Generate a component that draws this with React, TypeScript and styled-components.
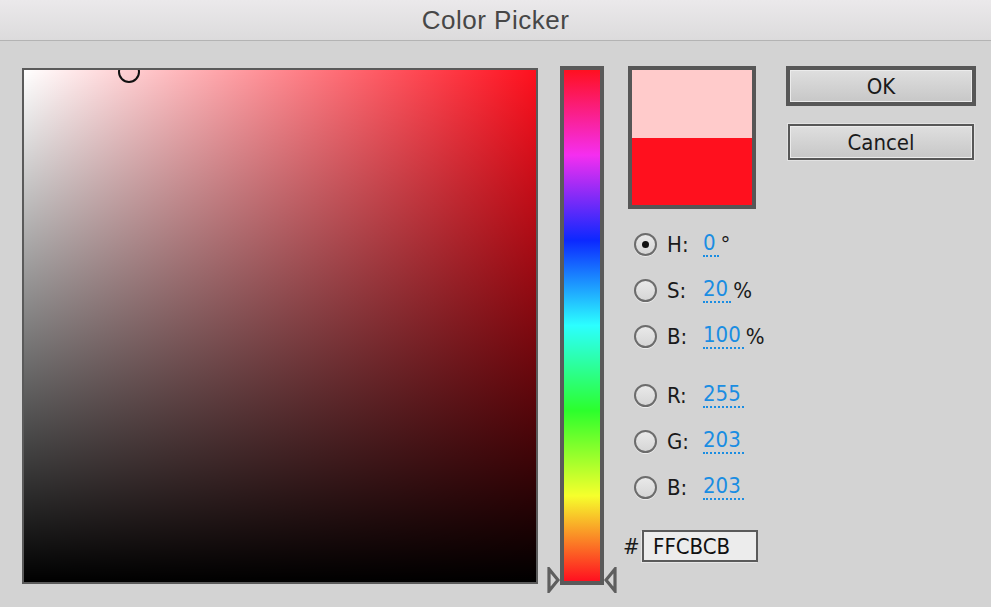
import React from 'react';
import styled, { createGlobalStyle } from 'styled-components';

const UI = '"DejaVu Sans Condensed", "DejaVu Sans", sans-serif';

const Global = createGlobalStyle`
  html, body { margin: 0; padding: 0; background: #d3d3d3; }
  body { font-family: ${UI}; }
  * { box-sizing: border-box; }
`;

const Window = styled.div`
  width: 991px;
  height: 607px;
  background: #d3d3d3;
  overflow: hidden;
  display: flex;
  flex-direction: column;
`;

const TitleBar = styled.div`
  height: 41px;
  flex-shrink: 0;
  background: linear-gradient(#ebe9eb, #dcdbdc);
  border-bottom: 1px solid #b3b3b3;
  display: flex;
  align-items: center;
  justify-content: center;
  font-family: "Liberation Sans", Arial, sans-serif;
  font-size: 26px;
  letter-spacing: 0.5px;
  color: #474747;
`;

const Body = styled.div`
  display: flex;
  align-items: flex-start;
  padding: 25px 0 0 22px;
`;

const SVBox = styled.div`
  margin-top: 2px;
  width: 516px;
  height: 516px;
  flex-shrink: 0;
  border: 2px solid #5a5a5a;
  position: relative;
  overflow: hidden;
  background: linear-gradient(to top, #000 0%, rgba(0, 0, 0, 0) 100%),
    linear-gradient(to right, #ffffff 0%, #ff101e 100%);
`;

const SVMarker = styled.div`
  position: absolute;
  width: 22px;
  height: 22px;
  border: 2px solid #111;
  border-radius: 50%;
`;

const HueWrap = styled.div`
  margin-left: 22px;
  position: relative;
  width: 44px;
  height: 519px;
  flex-shrink: 0;
`;

const HueBar = styled.div`
  width: 100%;
  height: 100%;
  border: 4px solid #5a5a5a;
  background: linear-gradient(
    to bottom,
    #ff1020 0%,
    #f52ef0 16.67%,
    #0c28ff 33.33%,
    #2cffff 50%,
    #2cff2c 66.67%,
    #f6ff2c 83.33%,
    #ff1020 100%
  );
`;

const HueArrow = styled.svg<{ $side: 'left' | 'right' }>`
  position: absolute;
  top: 501px;
  ${(p) => (p.$side === 'left' ? 'left: -13px;' : 'left: 44px;')}
  width: 13px;
  height: 26px;
`;

const RightCol = styled.div`
  margin-left: 16px;
  width: 136px;
  flex-shrink: 0;
  display: flex;
  flex-direction: column;
`;

const Swatch = styled.div`
  margin-left: 8px;
  width: 128px;
  height: 143px;
  border: 4px solid #565656;
  display: flex;
  flex-direction: column;
`;

const SwatchHalf = styled.div<{ $color: string; $h?: number }>`
  background: ${(p) => p.$color};
  ${(p) => (p.$h ? `height: ${p.$h}px;` : 'flex: 1;')}
`;

const RadioGroup = styled.div<{ $top: number }>`
  margin-top: ${(p) => p.$top}px;
  padding-left: 14px;
  display: flex;
  flex-direction: column;
`;

const Row = styled.div`
  height: 46px;
  display: flex;
  align-items: center;
  font-size: 22px;
  color: #1a1a1a;
  white-space: nowrap;
  & > * { flex-shrink: 0; }
`;

const Radio = styled.span<{ $checked?: boolean }>`
  width: 23px;
  height: 23px;
  border-radius: 50%;
  border: 2px solid #6c6c6c;
  background: linear-gradient(#e9e9e9, #d6d6d6);
  box-shadow: 0 1px 0 rgba(255, 255, 255, 0.55);
  display: flex;
  align-items: center;
  justify-content: center;
  margin-right: 10px;
  &::after {
    content: '';
    display: ${(p) => (p.$checked ? 'block' : 'none')};
    width: 7px;
    height: 7px;
    border-radius: 50%;
    background: #111;
  }
`;

const Label = styled.span`
  width: 36px;
`;

const Value = styled.span`
  color: #1a8de2;
  padding-right: 3px;
  border-bottom: 2px dotted #1a8de2;
  line-height: 24px;
`;

const Unit = styled.span`
  margin-left: 2px;
  color: #1a1a1a;
`;

const HexRow = styled.div`
  margin-top: 20px;
  padding-left: 3px;
  display: flex;
  align-items: center;
  font-size: 22px;
  color: #1a1a1a;
`;

const Hash = styled.span`
  width: 19px;
  flex-shrink: 0;
`;

const HexInput = styled.div`
  width: 116px;
  height: 32px;
  flex-shrink: 0;
  border: 2px solid #5a5a5a;
  background: #ececec;
  box-shadow: -1px 1px 0 #e6e6e6;
  padding-left: 9px;
  display: flex;
  align-items: center;
  font-size: 22px;
  color: #111;
`;

const ButtonCol = styled.div`
  margin-left: 30px;
  width: 190px;
  flex-shrink: 0;
  display: flex;
  flex-direction: column;
`;

const Button = styled.div<{ $default?: boolean }>`
  height: ${(p) => (p.$default ? 40 : 36)}px;
  margin: ${(p) => (p.$default ? '0' : '18px 2px 0')};
  border: ${(p) => (p.$default ? 4 : 2)}px solid #575757;
  background: linear-gradient(#dfdfdf, #c7c7c7);
  box-shadow: inset 0 0 0 1px #ececec${(p) => (p.$default ? '' : ', 0 0 0 1px #e2e2e2')};
  display: flex;
  align-items: center;
  justify-content: center;
  font-size: 22px;
  color: #1a1a1a;
`;

const Arrow = ({ side }: { side: 'left' | 'right' }) => (
  <HueArrow $side={side} viewBox="0 0 13 26">
    {side === 'left' ? (
      <polygon points="2,2 11,13 2,24" fill="#d6d6d6" stroke="#5e5e5e" strokeWidth="3.2" strokeLinejoin="miter" />
    ) : (
      <polygon points="11,2 2,13 11,24" fill="#d6d6d6" stroke="#5e5e5e" strokeWidth="3.2" strokeLinejoin="miter" />
    )}
  </HueArrow>
);

type Field = { k: string; v: string; unit?: string; checked?: boolean };

const hsb: Field[] = [
  { k: 'H:', v: '0', unit: '°', checked: true },
  { k: 'S:', v: '20', unit: '%' },
  { k: 'B:', v: '100', unit: '%' },
];
const rgb: Field[] = [
  { k: 'R:', v: '255' },
  { k: 'G:', v: '203' },
  { k: 'B:', v: '203' },
];

const FieldRow = ({ f }: { f: Field }) => (
  <Row>
    <Radio $checked={f.checked} />
    <Label>{f.k}</Label>
    <Value>{f.v}</Value>
    {f.unit && <Unit>{f.unit}</Unit>}
  </Row>
);

export default function App() {
  return (
    <Window>
      <Global />
      <TitleBar>Color Picker</TitleBar>
      <Body>
        <SVBox>
          <SVMarker style={{ left: 94, top: -9 }} />
        </SVBox>
        <HueWrap>
          <HueBar />
          <Arrow side="left" />
          <Arrow side="right" />
        </HueWrap>
        <RightCol>
          <Swatch>
            <SwatchHalf $color="#ffcbcb" $h={68} />
            <SwatchHalf $color="#ff101e" />
          </Swatch>
          <RadioGroup $top={12}>
            {hsb.map((f) => (
              <FieldRow key={f.k} f={f} />
            ))}
          </RadioGroup>
          <RadioGroup $top={13}>
            {rgb.map((f) => (
              <FieldRow key={f.k} f={f} />
            ))}
          </RadioGroup>
          <HexRow>
            <Hash>#</Hash>
            <HexInput>FFCBCB</HexInput>
          </HexRow>
        </RightCol>
        <ButtonCol>
          <Button $default>OK</Button>
          <Button>Cancel</Button>
        </ButtonCol>
      </Body>
    </Window>
  );
}
